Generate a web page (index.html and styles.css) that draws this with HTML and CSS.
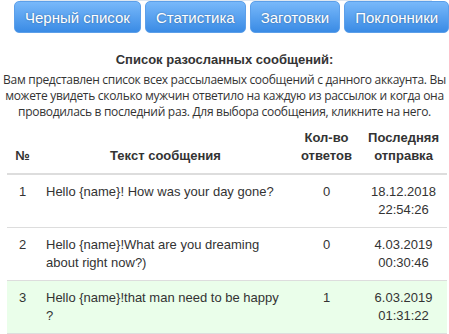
FILE: index.html
```html
<!DOCTYPE html>
<html lang="ru">
<head>
  <meta charset="UTF-8">
  <title>Рассылки</title>
  <link rel="stylesheet" href="styles.css">
</head>
<body>
  <div class="top-line"></div>
  <nav class="menu">
    <button class="menu-btn">Черный список</button>
    <button class="menu-btn">Статистика</button>
    <button class="menu-btn">Заготовки</button>
    <button class="menu-btn">Поклонники</button>
  </nav>

  <h3 class="title">Список разосланных сообщений:</h3>
  <p class="info">Вам представлен список всех рассылаемых сообщений с данного аккаунта. Вы можете увидеть сколько мужчин ответило на каждую из рассылок и когда она проводилась в последний раз. Для выбора сообщения, кликните на него.</p>

  <!-- Таблица сообщений -->
  <table class="messages">
    <colgroup>
      <col class="c-num">
      <col class="c-text">
      <col class="c-count">
      <col class="c-date">
    </colgroup>
    <thead>
      <tr>
        <th>№</th>
        <th>Текст сообщения</th>
        <th>Кол-во ответов</th>
        <th>Последняя отправка</th>
      </tr>
    </thead>
    <tbody>
      <tr>
        <td class="center">1</td>
        <td>Hello {name}! How was your day gone?</td>
        <td class="center">0</td>
        <td class="center">18.12.2018 22:54:26</td>
      </tr>
      <tr>
        <td class="center">2</td>
        <td>Hello {name}!What are you dreaming about right now?)</td>
        <td class="center">0</td>
        <td class="center">4.03.2019 00:30:46</td>
      </tr>
      <tr class="selected">
        <td class="center">3</td>
        <td>Hello {name}!that man need to be happy ?</td>
        <td class="center">1</td>
        <td class="center">6.03.2019 01:31:22</td>
      </tr>
    </tbody>
  </table>
</body>
</html>
```

FILE: styles.css
```css
body {
  margin: 0;
  background: #fff;
  color: #333;
  font-family: "Liberation Sans", Arial, sans-serif;
}

.top-line {
  height: 1px;
  margin: 0 17px 0 20px;
  background: #dfe7f0;
}

/* Верхнее меню */
.menu {
  display: flex;
  gap: 4px;
  padding-left: 14px;
}

.menu-btn {
  flex-shrink: 0;
  height: 32px;
  padding: 0 10px;
  border: 1px solid #5c9fe9;
  border-radius: 5px;
  background: linear-gradient(#78b8fa, #3a8be5);
  color: #fff;
  font-family: "Liberation Sans", Arial, sans-serif;
  font-size: 15px;
  white-space: nowrap;
  text-shadow: 0 0 2px rgba(0,0,0,0.35);
  cursor: pointer;
}

.title {
  margin: 19px 0 0;
  font-size: 13px;
  line-height: 16px;
  text-align: center;
}

.info {
  margin: 4px 0 0;
  font-family: "Open Sans", sans-serif;
  font-size: 12px;
  letter-spacing: -0.3px;
  line-height: 16px;
  text-align: center;
}

/* Таблица */
.messages {
  margin: 1px 0 0 7px;
  width: 440px;
  table-layout: fixed;
  border-collapse: collapse;
  font-size: 13px;
  line-height: 18px;
}

.c-num { width: 31px; }
.c-text { width: 255px; }
.c-count { width: 67px; }
.c-date { width: 87px; }

.messages th {
  padding: 8px;
  text-align: center;
  vertical-align: bottom;
  border-bottom: 2px solid #ddd;
}

.messages td {
  padding: 8px;
  vertical-align: top;
  border-bottom: 1px solid #ddd;
}

.messages td.center {
  text-align: center;
}

.messages tr.selected td {
  background: #eafeea;
}
```
